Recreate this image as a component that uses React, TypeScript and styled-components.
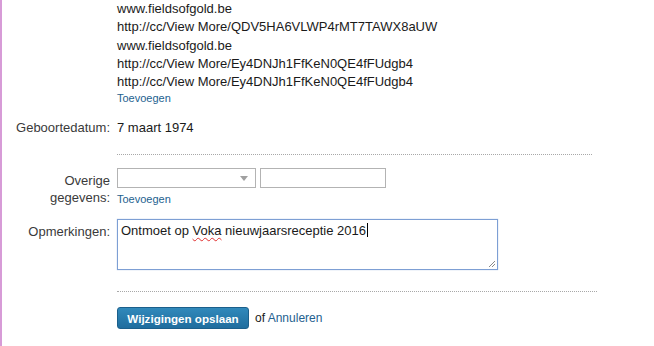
import styled, { createGlobalStyle } from 'styled-components';

const GlobalStyle = createGlobalStyle`
  html, body {
    margin: 0;
    padding: 0;
    background: #ffffff;
  }
  body {
    font-family: 'Liberation Sans', Arial, sans-serif;
    color: #222222;
  }
`;

const Page = styled.div`
  border-left: 2px solid #d79bd7;
  min-height: 346px;
  box-sizing: border-box;
`;

const Row = styled.div<{ $top?: number }>`
  display: grid;
  grid-template-columns: 108px 1fr;
  column-gap: 7px;
  margin-top: ${(p) => p.$top ?? 0}px;
`;

const Label = styled.div<{ $pad?: number; $lh?: number }>`
  text-align: right;
  font-size: 13px;
  line-height: ${(p) => p.$lh ?? 18}px;
  padding-top: ${(p) => p.$pad ?? 0}px;
  color: #3a3a3a;
`;

const Value = styled.div`
  font-size: 13px;
  line-height: 18px;
  color: #1a1a1a;
`;

const LinkLine = styled.div`
  font-size: 13px;
  line-height: 18.25px;
  color: #1a1a1a;
  white-space: nowrap;
`;

const AddLink = styled.a<{ $top?: number }>`
  display: block;
  margin-top: ${(p) => p.$top ?? 0}px;
  font-size: 11px;
  line-height: 14px;
  color: #24618f;
  text-decoration: none;
  cursor: pointer;
`;

const Divider = styled.div<{ $top: number; $width: number }>`
  margin-top: ${(p) => p.$top}px;
  margin-left: 115px;
  width: ${(p) => p.$width}px;
  border-top: 1px dotted #a8a8a8;
`;

const Fields = styled.div`
  display: flex;
  gap: 4px;
`;

const SelectBox = styled.div`
  position: relative;
  box-sizing: border-box;
  width: 139px;
  height: 20px;
  border: 1px solid #b3b3b3;
  background: #ffffff;
`;

const Arrow = styled.span`
  position: absolute;
  right: 7px;
  top: 7px;
  width: 0;
  height: 0;
  border-left: 4px solid transparent;
  border-right: 4px solid transparent;
  border-top: 5px solid #a0a0a0;
`;

const TextInput = styled.input`
  box-sizing: border-box;
  width: 126px;
  height: 20px;
  border: 1px solid #b3b3b3;
  padding: 0 3px;
  font-family: 'Liberation Sans', Arial, sans-serif;
  font-size: 13px;
  outline: none;
`;

const NoteBox = styled.div`
  position: relative;
  box-sizing: border-box;
  width: 381px;
  height: 51px;
  border: 1px solid #7d9fd4;
  box-shadow: 0 0 1px rgba(90, 130, 200, 0.5);
  padding: 3px 3px;
  font-size: 13px;
  line-height: 16px;
  color: #1a1a1a;
`;

const Misspelled = styled.span`
  text-decoration: underline wavy #e03030;
  text-decoration-thickness: 1px;
  text-underline-offset: 2px;
`;

const Caret = styled.span`
  display: inline-block;
  width: 1px;
  height: 14px;
  margin-left: 1px;
  background: #000000;
  vertical-align: -2px;
`;

const Grip = styled.svg`
  position: absolute;
  right: 1px;
  bottom: 1px;
`;

const Actions = styled.div`
  display: flex;
  align-items: center;
  gap: 6px;
`;

const SaveButton = styled.button`
  box-sizing: border-box;
  height: 22px;
  width: 132px;
  padding: 0;
  border: 1px solid #1b5f8b;
  border-radius: 3px;
  background: linear-gradient(#3189bb, #1f6d9e);
  color: #ffffff;
  font-family: 'Liberation Sans', Arial, sans-serif;
  font-weight: bold;
  font-size: 11.6px;
  cursor: pointer;
`;

const Or = styled.span`
  font-size: 12px;
  color: #1a1a1a;

  & a {
    color: #24618f;
    text-decoration: none;
  }
`;

const links = [
  'www.fieldsofgold.be',
  'http://cc/View More/QDV5HA6VLWP4rMT7TAWX8aUW',
  'www.fieldsofgold.be',
  'http://cc/View More/Ey4DNJh1FfKeN0QE4fFUdgb4',
  'http://cc/View More/Ey4DNJh1FfKeN0QE4fFUdgb4',
];

export default function App() {
  return (
    <>
      <GlobalStyle />
      <Page>
        <Row>
          <div />
          <div>
            {links.map((l, i) => (
              <LinkLine key={i}>{l}</LinkLine>
            ))}
            <AddLink>Toevoegen</AddLink>
          </div>
        </Row>

        <Row $top={14}>
          <Label>Geboortedatum:</Label>
          <Value>7 maart 1974</Value>
        </Row>

        <Divider $top={17} $width={475} />

        <Row $top={13}>
          <Label $pad={4} $lh={17}>
            Overige
            <br />
            gegevens:
          </Label>
          <div>
            <Fields>
              <SelectBox>
                <Arrow />
              </SelectBox>
              <TextInput type="text" />
            </Fields>
            <AddLink $top={4}>Toevoegen</AddLink>
          </div>
        </Row>

        <Row $top={13}>
          <Label $pad={4}>Opmerkingen:</Label>
          <NoteBox>
            Ontmoet op <Misspelled>Voka</Misspelled> nieuwjaarsreceptie 2016
            <Caret />
            <Grip width="9" height="9" viewBox="0 0 9 9">
              <path d="M8 2 L2 8 M8 5 L5 8" stroke="#8a8a8a" strokeWidth="1" />
            </Grip>
          </NoteBox>
        </Row>

        <Divider $top={21} $width={480} />

        <Row $top={15}>
          <div />
          <Actions>
            <SaveButton>Wijzigingen opslaan</SaveButton>
            <Or>
              of <a>Annuleren</a>
            </Or>
          </Actions>
        </Row>
      </Page>
    </>
  );
}
